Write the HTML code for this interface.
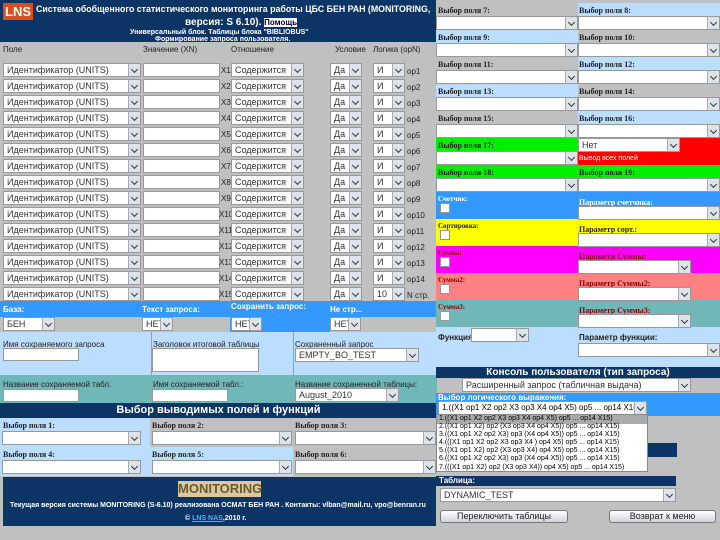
<!DOCTYPE html><html><head><meta charset="utf-8"><style>
*{margin:0;padding:0;box-sizing:border-box}
body{width:720px;height:540px;background:#c0c0c0;position:relative;overflow:hidden;font-family:"Liberation Sans",sans-serif;font-size:9px;color:#222}
div,span{position:absolute}
.s{background:#fff;border:1px solid #999;height:14px;line-height:12px;padding-left:3px;white-space:nowrap;overflow:hidden;color:#333}
.s:after{content:"";position:absolute;right:0;top:0;width:11px;height:12px;background:#dde3ea;border-left:1px solid #aaa}
.s:before{content:"";position:absolute;right:3px;top:3px;width:4px;height:4px;border-right:1.5px solid #333;border-bottom:1.5px solid #333;transform:rotate(45deg);z-index:2}
.i{background:#fff;border:1px solid #999;height:14px}
.l{white-space:nowrap;font-size:8px}
.t{font-family:"Liberation Serif",serif;font-weight:bold;font-size:8px;white-space:nowrap}
.w{color:#fff}
</style></head><body>
<div style="left:0;top:0;width:437px;height:42px;background:#0c3566"></div>
<div style="left:3px;top:3px;width:30px;height:17px;background:#d9501e;color:#fff;font-weight:bold;font-size:13px;line-height:17px;text-align:center">LNS</div>
<div class="w" style="left:36px;top:4px;font-weight:bold;font-size:8.8px;white-space:nowrap">Система обобщенного статистического мониторинга работы ЦБС БЕН РАН (MONITORING,</div>
<div class="w" style="left:185px;top:17px;font-weight:bold;font-size:10px;white-space:nowrap">версия: S 6.10). <span style="position:static;background:#fff;color:#003;font-size:8px">Помощь</span></div>
<div class="w" style="left:130px;top:29px;font-weight:bold;font-size:7px;white-space:nowrap">Универсальный блок. Таблицы блока "BIBLIOBUS"</div>
<div class="w" style="left:155px;top:36px;font-weight:bold;font-size:7px;white-space:nowrap">Формирование запроса пользователя.</div>
<div class="l" style="left:3px;top:45px">Поле</div>
<div class="l" style="left:143px;top:45px">Значение (XN)</div>
<div class="l" style="left:231px;top:45px">Отношение</div>
<div class="l" style="left:335px;top:45px">Условие</div>
<div class="l" style="left:373px;top:45px">Логика (opN)</div>

<div style="left:3px;top:63px"><div class="s" style="left:0;top:0;width:138px">Идентификатор (UNITS)</div><div class="i" style="left:140px;top:0;width:77px"></div><div class="l" style="left:218px;top:3px">X1</div><div class="s" style="left:228px;top:0;width:73px">Содержится</div><div class="s" style="left:327px;top:0;width:32px">Да</div><div class="s" style="left:370px;top:0;width:32px">И</div><div class="l" style="left:404px;top:4px">op1</div></div>
<div style="left:3px;top:79px"><div class="s" style="left:0;top:0;width:138px">Идентификатор (UNITS)</div><div class="i" style="left:140px;top:0;width:77px"></div><div class="l" style="left:218px;top:3px">X2</div><div class="s" style="left:228px;top:0;width:73px">Содержится</div><div class="s" style="left:327px;top:0;width:32px">Да</div><div class="s" style="left:370px;top:0;width:32px">И</div><div class="l" style="left:404px;top:4px">op2</div></div>
<div style="left:3px;top:95px"><div class="s" style="left:0;top:0;width:138px">Идентификатор (UNITS)</div><div class="i" style="left:140px;top:0;width:77px"></div><div class="l" style="left:218px;top:3px">X3</div><div class="s" style="left:228px;top:0;width:73px">Содержится</div><div class="s" style="left:327px;top:0;width:32px">Да</div><div class="s" style="left:370px;top:0;width:32px">И</div><div class="l" style="left:404px;top:4px">op3</div></div>
<div style="left:3px;top:111px"><div class="s" style="left:0;top:0;width:138px">Идентификатор (UNITS)</div><div class="i" style="left:140px;top:0;width:77px"></div><div class="l" style="left:218px;top:3px">X4</div><div class="s" style="left:228px;top:0;width:73px">Содержится</div><div class="s" style="left:327px;top:0;width:32px">Да</div><div class="s" style="left:370px;top:0;width:32px">И</div><div class="l" style="left:404px;top:4px">op4</div></div>
<div style="left:3px;top:127px"><div class="s" style="left:0;top:0;width:138px">Идентификатор (UNITS)</div><div class="i" style="left:140px;top:0;width:77px"></div><div class="l" style="left:218px;top:3px">X5</div><div class="s" style="left:228px;top:0;width:73px">Содержится</div><div class="s" style="left:327px;top:0;width:32px">Да</div><div class="s" style="left:370px;top:0;width:32px">И</div><div class="l" style="left:404px;top:4px">op5</div></div>
<div style="left:3px;top:143px"><div class="s" style="left:0;top:0;width:138px">Идентификатор (UNITS)</div><div class="i" style="left:140px;top:0;width:77px"></div><div class="l" style="left:218px;top:3px">X6</div><div class="s" style="left:228px;top:0;width:73px">Содержится</div><div class="s" style="left:327px;top:0;width:32px">Да</div><div class="s" style="left:370px;top:0;width:32px">И</div><div class="l" style="left:404px;top:4px">op6</div></div>
<div style="left:3px;top:159px"><div class="s" style="left:0;top:0;width:138px">Идентификатор (UNITS)</div><div class="i" style="left:140px;top:0;width:77px"></div><div class="l" style="left:218px;top:3px">X7</div><div class="s" style="left:228px;top:0;width:73px">Содержится</div><div class="s" style="left:327px;top:0;width:32px">Да</div><div class="s" style="left:370px;top:0;width:32px">И</div><div class="l" style="left:404px;top:4px">op7</div></div>
<div style="left:3px;top:175px"><div class="s" style="left:0;top:0;width:138px">Идентификатор (UNITS)</div><div class="i" style="left:140px;top:0;width:77px"></div><div class="l" style="left:218px;top:3px">X8</div><div class="s" style="left:228px;top:0;width:73px">Содержится</div><div class="s" style="left:327px;top:0;width:32px">Да</div><div class="s" style="left:370px;top:0;width:32px">И</div><div class="l" style="left:404px;top:4px">op8</div></div>
<div style="left:3px;top:191px"><div class="s" style="left:0;top:0;width:138px">Идентификатор (UNITS)</div><div class="i" style="left:140px;top:0;width:77px"></div><div class="l" style="left:218px;top:3px">X9</div><div class="s" style="left:228px;top:0;width:73px">Содержится</div><div class="s" style="left:327px;top:0;width:32px">Да</div><div class="s" style="left:370px;top:0;width:32px">И</div><div class="l" style="left:404px;top:4px">op9</div></div>
<div style="left:3px;top:207px"><div class="s" style="left:0;top:0;width:138px">Идентификатор (UNITS)</div><div class="i" style="left:140px;top:0;width:77px"></div><div class="l" style="left:216px;top:3px">X10</div><div class="s" style="left:228px;top:0;width:73px">Содержится</div><div class="s" style="left:327px;top:0;width:32px">Да</div><div class="s" style="left:370px;top:0;width:32px">И</div><div class="l" style="left:404px;top:4px">op10</div></div>
<div style="left:3px;top:223px"><div class="s" style="left:0;top:0;width:138px">Идентификатор (UNITS)</div><div class="i" style="left:140px;top:0;width:77px"></div><div class="l" style="left:216px;top:3px">X11</div><div class="s" style="left:228px;top:0;width:73px">Содержится</div><div class="s" style="left:327px;top:0;width:32px">Да</div><div class="s" style="left:370px;top:0;width:32px">И</div><div class="l" style="left:404px;top:4px">op11</div></div>
<div style="left:3px;top:239px"><div class="s" style="left:0;top:0;width:138px">Идентификатор (UNITS)</div><div class="i" style="left:140px;top:0;width:77px"></div><div class="l" style="left:216px;top:3px">X12</div><div class="s" style="left:228px;top:0;width:73px">Содержится</div><div class="s" style="left:327px;top:0;width:32px">Да</div><div class="s" style="left:370px;top:0;width:32px">И</div><div class="l" style="left:404px;top:4px">op12</div></div>
<div style="left:3px;top:255px"><div class="s" style="left:0;top:0;width:138px">Идентификатор (UNITS)</div><div class="i" style="left:140px;top:0;width:77px"></div><div class="l" style="left:216px;top:3px">X13</div><div class="s" style="left:228px;top:0;width:73px">Содержится</div><div class="s" style="left:327px;top:0;width:32px">Да</div><div class="s" style="left:370px;top:0;width:32px">И</div><div class="l" style="left:404px;top:4px">op13</div></div>
<div style="left:3px;top:271px"><div class="s" style="left:0;top:0;width:138px">Идентификатор (UNITS)</div><div class="i" style="left:140px;top:0;width:77px"></div><div class="l" style="left:216px;top:3px">X14</div><div class="s" style="left:228px;top:0;width:73px">Содержится</div><div class="s" style="left:327px;top:0;width:32px">Да</div><div class="s" style="left:370px;top:0;width:32px">И</div><div class="l" style="left:404px;top:4px">op14</div></div>
<div style="left:3px;top:287px"><div class="s" style="left:0;top:0;width:138px">Идентификатор (UNITS)</div><div class="i" style="left:140px;top:0;width:77px"></div><div class="l" style="left:216px;top:3px">X15</div><div class="s" style="left:228px;top:0;width:73px">Содержится</div><div class="s" style="left:327px;top:0;width:32px">Да</div><div class="s" style="left:370px;top:0;width:32px">10</div><div class="l" style="left:404px;top:4px">N стр.</div></div>

<div style="left:0;top:301px;width:437px;height:16px;background:#3399ff"></div>
<div style="left:230px;top:317px;width:100px;height:15px;background:#3399ff"></div>
<div class="l w" style="left:3px;top:305px;font-weight:bold">База:</div>
<div class="l w" style="left:142px;top:305px;font-weight:bold">Текст запроса:</div>
<div class="l w" style="left:231px;top:302px;font-weight:bold">Сохранить запрос:</div>
<div class="l w" style="left:330px;top:305px;font-weight:bold">Не стр...</div>
<div class="s" style="left:3px;top:317px;width:52px">БЕН</div>
<div class="s" style="left:142px;top:317px;width:31px">НЕТ</div>
<div class="s" style="left:231px;top:317px;width:31px">НЕТ</div>
<div class="s" style="left:330px;top:317px;width:31px">НЕТ</div>
<div style="left:0;top:332px;width:437px;height:43px;background:#bbddff"></div>
<div style="left:151px;top:332px;width:1px;height:43px;background:#99b"></div>
<div style="left:293px;top:332px;width:1px;height:43px;background:#99b"></div>
<div class="l" style="left:3px;top:340px">Имя сохраняемого запроса</div>
<div class="l" style="left:153px;top:340px">Заголовок итоговой таблицы</div>
<div class="l" style="left:295px;top:340px">Сохраненный запрос</div>
<div class="i" style="left:3px;top:348px;width:76px;height:13px"></div>
<div class="i" style="left:152px;top:348px;width:107px;height:24px"></div>
<div class="s" style="left:295px;top:348px;width:124px">EMPTY_BO_TEST</div>
<div style="left:0;top:375px;width:437px;height:28px;background:#70b8b8"></div>
<div class="l" style="left:3px;top:380px">Название сохраняемой табл.</div>
<div class="l" style="left:153px;top:380px">Имя сохраняемой табл.:</div>
<div class="l" style="left:295px;top:380px">Название сохраненной таблицы:</div>
<div class="i" style="left:3px;top:389px;width:76px;height:13px"></div>
<div class="i" style="left:152px;top:389px;width:76px;height:13px"></div>
<div class="s" style="left:295px;top:388px;width:104px">August_2010</div>
<div style="left:0;top:403px;width:437px;height:15px;background:#0c3566;color:#fff;font-weight:bold;font-size:11px;text-align:center;line-height:15px">Выбор выводимых полей и функций</div>
<div style="left:0;top:418px;width:150px;height:58px;background:#bbddff"></div>
<div style="left:150px;top:447px;width:143px;height:29px;background:#bbddff"></div>
<div class="t" style="left:3px;top:421px">Выбор поля 1:</div>
<div class="t" style="left:152px;top:421px">Выбор поля 2:</div>
<div class="t" style="left:295px;top:421px">Выбор поля 3:</div>
<div class="t" style="left:3px;top:450px">Выбор поля 4:</div>
<div class="t" style="left:152px;top:450px">Выбор поля 5:</div>
<div class="t" style="left:295px;top:450px">Выбор поля 6:</div>
<div class="s" style="left:2px;top:431px;width:139px"></div>
<div class="s" style="left:152px;top:431px;width:140px"></div>
<div class="s" style="left:295px;top:431px;width:141px"></div>
<div class="s" style="left:2px;top:460px;width:139px"></div>
<div class="s" style="left:152px;top:460px;width:140px"></div>
<div class="s" style="left:295px;top:460px;width:141px"></div>
<div style="left:3px;top:477px;width:433px;height:49px;background:#0c3566"></div>
<div style="left:178px;top:481px;width:83px;height:16px;background:#d8c9a0;color:#6b5a30;font-weight:bold;font-size:13px;text-align:center;line-height:16px">MONITORING</div>
<div class="w" style="left:10px;top:502px;font-size:7px;font-weight:bold;white-space:nowrap">Текущая версия системы MONITORING (S-6.10) реализована ОСМАТ БЕН РАН . Контакты: vlban@mail.ru, vpo@benran.ru</div>
<div class="w" style="left:185px;top:515px;font-size:7px;font-weight:bold;white-space:nowrap">© <u style="color:#5af">LNS NAS</u>,2010 г.</div>

<div style="left:436px;top:0;width:284px;height:367px;background:#c0c0c0"></div>
<div style="left:578px;top:3px;width:142px;height:27px;background:#bbddff"></div>
<div style="left:436px;top:30px;width:142px;height:27px;background:#bbddff"></div>
<div style="left:578px;top:57px;width:142px;height:27px;background:#bbddff"></div>
<div style="left:436px;top:84px;width:142px;height:27px;background:#bbddff"></div>
<div style="left:578px;top:111px;width:142px;height:27px;background:#bbddff"></div>
<div style="left:436px;top:138px;width:142px;height:27px;background:#00ee00"></div>
<div style="left:578px;top:138px;width:142px;height:27px;background:#ff0000"></div>
<div style="left:436px;top:165px;width:284px;height:27px;background:#00ee00"></div>
<div style="left:436px;top:192px;width:284px;height:27px;background:#3399ff"></div>
<div style="left:436px;top:219px;width:284px;height:27px;background:#ffff00"></div>
<div style="left:436px;top:246px;width:284px;height:27px;background:#ff00ff"></div>
<div style="left:436px;top:273px;width:284px;height:27px;background:#ff8080"></div>
<div style="left:436px;top:300px;width:284px;height:27px;background:#70b8b8"></div>
<div style="left:436px;top:327px;width:284px;height:40px;background:#bbddff"></div>
<div class="t" style="left:438px;top:6px">Выбор поля 7:</div><div class="t" style="left:579px;top:6px">Выбор поля 8:</div>
<div class="t" style="left:438px;top:33px">Выбор поля 9:</div><div class="t" style="left:579px;top:33px">Выбор поля 10:</div>
<div class="t" style="left:438px;top:60px">Выбор поля 11:</div><div class="t" style="left:579px;top:60px">Выбор поля 12:</div>
<div class="t" style="left:438px;top:87px">Выбор поля 13:</div><div class="t" style="left:579px;top:87px">Выбор поля 14:</div>
<div class="t" style="left:438px;top:114px">Выбор поля 15:</div><div class="t" style="left:579px;top:114px">Выбор поля 16:</div>
<div class="t" style="left:438px;top:141px">Выбор поля 17:</div>
<div class="t" style="left:438px;top:168px">Выбор поля 18:</div><div class="t" style="left:579px;top:168px">Выбор поля 19:</div>
<div class="s" style="left:436px;top:16px;width:142px"></div><div class="s" style="left:578px;top:16px;width:142px"></div>
<div class="s" style="left:436px;top:43px;width:142px"></div><div class="s" style="left:578px;top:43px;width:142px"></div>
<div class="s" style="left:436px;top:70px;width:142px"></div><div class="s" style="left:578px;top:70px;width:142px"></div>
<div class="s" style="left:436px;top:97px;width:142px"></div><div class="s" style="left:578px;top:97px;width:142px"></div>
<div class="s" style="left:436px;top:124px;width:142px"></div><div class="s" style="left:578px;top:124px;width:142px"></div>
<div class="s" style="left:578px;top:138px;width:102px">Нет</div>
<div class="l" style="left:579px;top:155px;color:#fff;font-size:7px">Вывод всех полей</div>
<div class="s" style="left:436px;top:151px;width:142px"></div>
<div class="s" style="left:436px;top:178px;width:142px"></div><div class="s" style="left:578px;top:178px;width:142px"></div>
<div class="t w" style="left:438px;top:195px;font-size:7px">Счетчик:</div><div class="t w" style="left:579px;top:198px">Параметр счетчика:</div>
<div class="i" style="left:440px;top:203px;width:10px;height:10px"></div>
<div class="s" style="left:578px;top:206px;width:142px"></div>
<div class="t" style="left:438px;top:222px;font-size:7px">Сортировка:</div><div class="t" style="left:579px;top:225px">Параметр сорт.:</div>
<div class="i" style="left:440px;top:230px;width:10px;height:10px"></div>
<div class="s" style="left:578px;top:233px;width:142px"></div>
<div class="t" style="left:438px;top:249px;font-size:7px;color:#800">Сумма:</div><div class="t" style="left:579px;top:252px;color:#800">Параметр Суммы:</div>
<div class="i" style="left:440px;top:257px;width:10px;height:10px"></div>
<div class="s" style="left:578px;top:260px;width:113px"></div>
<div class="t" style="left:438px;top:276px;font-size:7px;color:#800">Сумма2:</div><div class="t" style="left:579px;top:279px;color:#800">Параметр Суммы2:</div>
<div class="i" style="left:440px;top:284px;width:10px;height:10px"></div>
<div class="s" style="left:578px;top:287px;width:113px"></div>
<div class="t" style="left:438px;top:303px;font-size:7px;color:#800">Сумма3:</div><div class="t" style="left:579px;top:306px;color:#800">Параметр Суммы3:</div>
<div class="i" style="left:440px;top:311px;width:10px;height:10px"></div>
<div class="s" style="left:578px;top:314px;width:113px"></div>
<div class="l" style="left:438px;top:333px;font-weight:bold">Функция:</div>
<div class="s" style="left:471px;top:328px;width:58px"></div>
<div class="l" style="left:579px;top:333px;font-weight:bold">Параметр функции:</div>
<div class="s" style="left:578px;top:343px;width:142px"></div>
<div style="left:436px;top:367px;width:284px;height:11px;background:#0c3566;color:#fff;font-weight:bold;font-size:10px;text-align:center;line-height:11px">Консоль пользователя (тип запроса)</div>
<div class="s" style="left:462px;top:378px;width:229px">Расширенный запрос (табличная выдача)</div>
<div style="left:436px;top:393px;width:284px;height:23px;background:#3399ff"></div>
<div class="l w" style="left:438px;top:393px;font-weight:bold">Выбор логического выражения:</div>
<div class="s" style="left:438px;top:401px;width:209px;color:#000;font-size:8px">1.((X1 op1 X2 op2 X3 op3 X4 op4 X5) op5 ... op14 X15)</div>
<div style="left:560px;top:443px;width:117px;height:14px;background:#0c3566"></div>
<div style="left:436px;top:414px;width:212px;height:58px;background:#fff;border:1px solid #888;font-size:7px;line-height:8.1px;color:#000;overflow:hidden">
<div style="left:0;top:0;width:210px;height:9px;background:#aaa"></div>
<div style="left:2px;top:0;white-space:pre">1.((X1 op1 X2 op2 X3 op3 X4 op4 X5) op5 ... op14 X15)
2.((X1 op1 X2) op2 (X3 op3 X4 op4 X5)) op5 ... op14 X15)
3.((X1 op1 X2 op2 X3) op3 (X4 op4 X5)) op5 ... op14 X15)
4.(((X1 op1 X2 op2 X3 op3 X4 ) op4 X5) op5 ... op14 X15)
5.((X1 op1 X2) op2 (X3 op3 X4) op4 X5) op5 ... op14 X15)
6.((X1 op1 X2 op2 X3) op3 (X4 op4 X5)) op5 ... op14 X15)
7.(((X1 op1 X2) op2 (X3 op3 X4)) op4 X5) op5 ... op14 X15)</div></div>
<div class="l w" style="left:436px;top:476px;width:240px;height:10px;background:#0c3566;font-weight:bold;padding-left:3px">Таблица:</div>
<div class="s" style="left:440px;top:488px;width:236px">DYNAMIC_TEST</div>
<div style="left:440px;top:510px;width:128px;height:13px;background:linear-gradient(#fff,#d0d4dc);border:1px solid #777;border-radius:3px;text-align:center;line-height:11px;font-size:9px">Переключить таблицы</div>
<div style="left:609px;top:510px;width:107px;height:13px;background:linear-gradient(#fff,#d0d4dc);border:1px solid #777;border-radius:3px;text-align:center;line-height:11px;font-size:9px">Возврат к меню</div>
</body></html>
